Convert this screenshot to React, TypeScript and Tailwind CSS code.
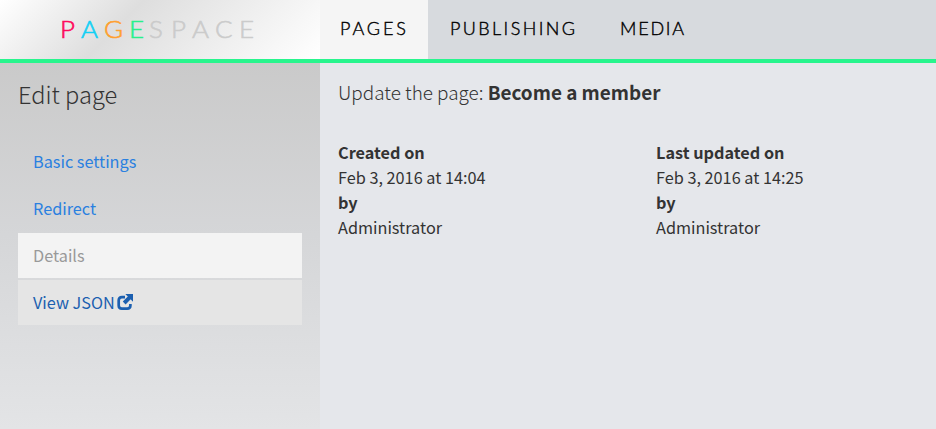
import type { ReactNode } from "react";

const logo = [
  { ch: "P", cls: "w-[21px] text-[#ff0a5b]" },
  { ch: "A", cls: "w-[23px] text-[#12d0f5]" },
  { ch: "G", cls: "w-[25px] text-[#ff9f2e]" },
  { ch: "E", cls: "w-[20px] text-[#28f08c]" },
  { ch: "S", cls: "w-[22px] text-[#cbcbcb]" },
  { ch: "P", cls: "w-[21px] text-[#cbcbcb]" },
  { ch: "A", cls: "w-[23px] text-[#cbcbcb]" },
  { ch: "C", cls: "w-[24px] text-[#cbcbcb]" },
  { ch: "E", cls: "w-5 text-[#cbcbcb]" },
];

function OpenIcon() {
  return (
    <svg viewBox="0 0 16 16" className="mb-0.5 ml-[2.5px] h-4 w-4" fill="none" stroke="currentColor">
      <path d="M8 3.1H4.9Q1.7 3.1 1.7 6.3v5.2q0 3.1 3.1 3.1h5.5q3.1 0 3.1-3.1V10" strokeWidth="2.7" />
      <path d="M7.2 9 13 3.2" strokeWidth="4" />
      <path d="M8.3 0H16v7.7Z" fill="currentColor" stroke="none" />
    </svg>
  );
}

function Stamp({ label, date }: { label: string; date: ReactNode }) {
  return (
    <div className="w-[318px] leading-[25px]">
      <p className="font-bold">{label}</p>
      <p>{date}</p>
      <p className="font-bold">by</p>
      <p>Administrator</p>
    </div>
  );
}

export default function App() {
  return (
    <div className="flex h-[429px] w-[936px] flex-col overflow-hidden bg-[#e5e7eb] font-['Noto_Sans_CJK_SC',sans-serif] text-[16.25px] text-[#333]">
      <header className="flex h-[63px] shrink-0 border-b-4 border-[#28f58d] bg-[#d7dade] font-['Lato',sans-serif]">
        <div className="flex w-80 items-center bg-[linear-gradient(135deg,#ffffff_0%,#dedede_38%,#ffffff_100%)] pb-0.5 pl-[60px] text-[24px] font-light leading-none [-webkit-text-stroke:0.6px]">
          {logo.map((l, i) => (
            <span key={i} className={l.cls}><span className="inline-block origin-left scale-x-108">{l.ch}</span></span>
          ))}
        </div>
        <nav className="flex pb-0.5 text-[18px] font-light text-black [-webkit-text-stroke:0.4px]">
          <a className="-mb-0.5 flex w-[108px] items-center bg-[#f5f5f5] pb-0.5 pl-5 tracking-[2.9px]">PAGES</a>
          <a className="flex w-[170px] items-center pl-[22px] tracking-[2.4px]">PUBLISHING</a>
          <a className="flex items-center pl-[22px] tracking-[1.8px]">MEDIA</a>
        </nav>
      </header>
      <div className="flex grow">
        <aside className="w-80 shrink-0 bg-[linear-gradient(#cacaca,#d5d6d8_47%,#e3e4e6)] px-[18px] pt-[13px]">
          <h1 className="text-[23.6px] font-light leading-9">Edit page</h1>
          <ul className="mt-[27px] flex flex-col gap-0.5 leading-[45px] text-[#2a80e0]">
            <li className="h-[45px] px-[15px]">Basic settings</li>
            <li className="h-[45px] px-[15px]">Redirect</li>
            <li className="h-[45px] bg-[#f3f3f3] px-[15px] text-[#999]">Details</li>
            <li className="flex h-[45px] items-center bg-[#e5e5e5] px-[15px] text-[#1b5fb0]">View JSON<OpenIcon /></li>
          </ul>
        </aside>
        <main className="shrink-0 pl-[18px] pt-[15px]">
          <h2 className="text-[18.9px] font-light leading-7">Update the page: <b className="font-bold">Become a member</b></h2>
          <div className="mt-[34px] flex">
            <Stamp label="Created on" date="Feb 3, 2016 at 14:04" />
            <Stamp label="Last updated on" date="Feb 3, 2016 at 14:25" />
          </div>
        </main>
      </div>
    </div>
  );
}
